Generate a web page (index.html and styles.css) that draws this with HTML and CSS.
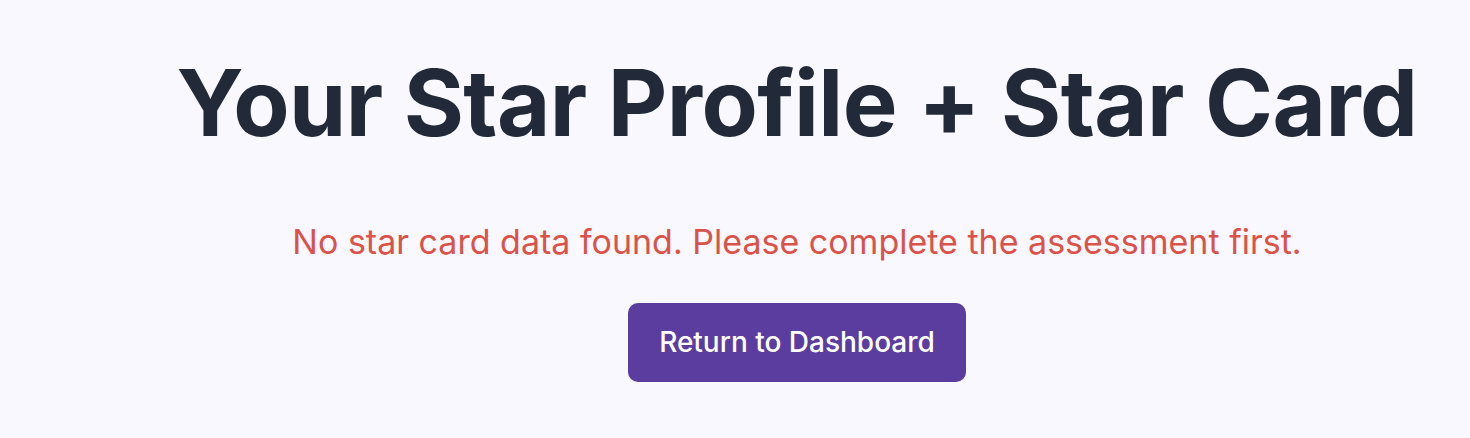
FILE: index.html
```html
<!DOCTYPE html>
<html lang="en">
<head>
<meta charset="utf-8">
<title>Your Star Profile + Star Card</title>
<link rel="stylesheet" href="styles.css">
</head>
<body>
<main class="page">
  <h1 class="title">Your Star Profile + Star Card</h1>
  <p class="error">No star card data found. Please complete the assessment first.</p>
  <button class="btn" type="button">Return to Dashboard</button>
</main>
</body>
</html>
```
FILE: styles.css
```css
html, body {
  margin: 0;
  padding: 0;
}
body {
  background: #f9f8fe;
  font-family: Inter, "Noto Sans", sans-serif;
  height: 438px;
  overflow: hidden;
}
.page {
  display: flex;
  flex-direction: column;
  align-items: center;
  padding: 48px 0 0 124px;
  text-align: center;
}
.title {
  margin: 0;
  font-size: 92px;
  line-height: 1.2;
  font-weight: 700;
  color: #222a3a;
  letter-spacing: -0.6px;
}
.error {
  margin: 62px 0 0;
  font-size: 34px;
  line-height: 1.3;
  color: #d9534a;
}
.btn {
  margin-top: 38px;
  width: 338px;
  height: 79px;
  border: none;
  border-radius: 10px;
  background: #5b3c9f;
  color: #ffffff;
  font-family: Inter, "Noto Sans", sans-serif;
  font-size: 28px;
  font-weight: 500;
  cursor: pointer;
}
```
